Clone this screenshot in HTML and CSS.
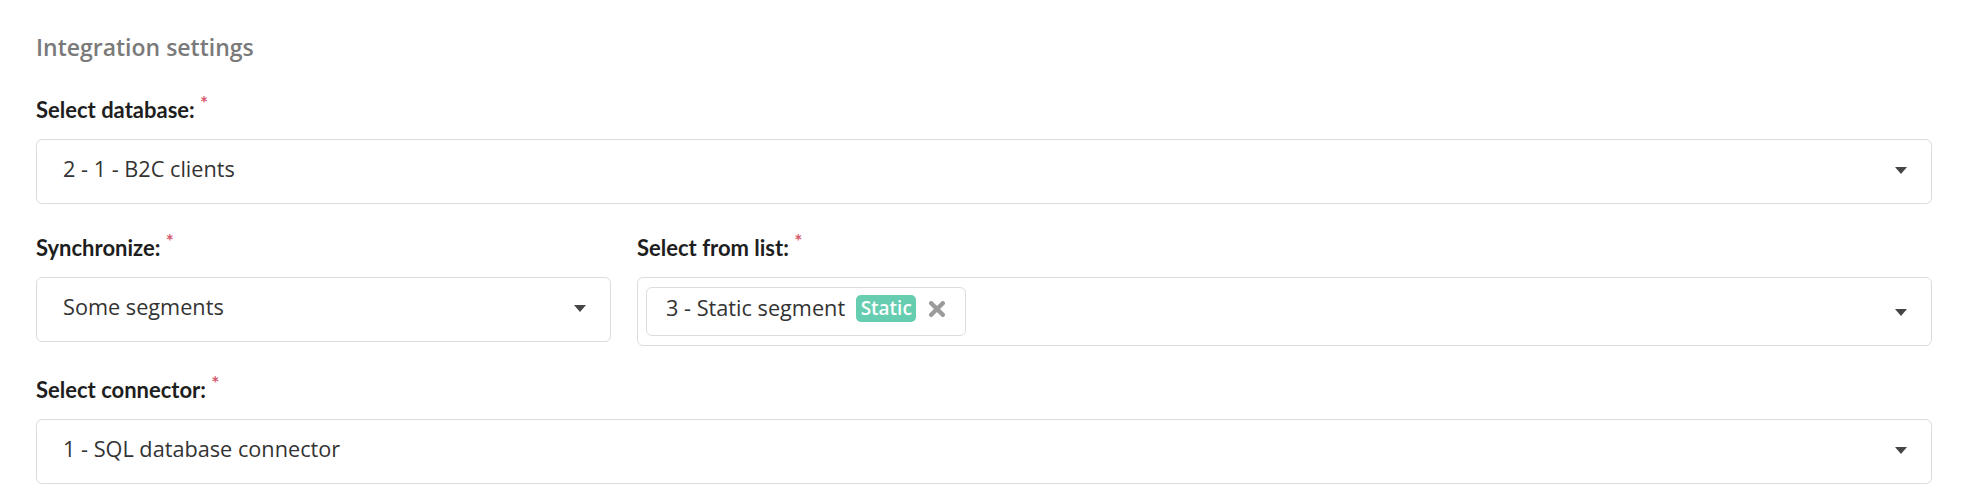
FILE: index.html
```html
<!DOCTYPE html>
<html lang="en">
<head>
<meta charset="utf-8">
<title>Integration settings</title>
<link rel="stylesheet" href="styles.css">
</head>
<body>
<main class="page">
  <h5 class="section-title">Integration settings</h5>

  <div class="form-group">
    <label class="field-label">Select database: <span class="req">*</span></label>
    <div class="select">
      <span class="select-value">2 - 1 - B2C clients</span>
      <span class="caret"></span>
    </div>
  </div>

  <div class="form-row">
    <div class="form-group">
      <label class="field-label">Synchronize: <span class="req">*</span></label>
      <div class="select">
        <span class="select-value">Some segments</span>
        <span class="caret"></span>
      </div>
    </div>
    <div class="form-group">
      <label class="field-label">Select from list: <span class="req">*</span></label>
      <div class="select select-multi">
        <span class="tag">
          <span class="tag-text">3 - Static segment</span>
          <span class="badge">Static</span>
          <svg class="tag-remove" width="18" height="16" viewBox="0 0 18 16" aria-hidden="true">
            <path d="M3.2 2.2 L14.8 13.8 M14.8 2.2 L3.2 13.8" stroke="#9b9b9b" stroke-width="4.4" stroke-linecap="round" fill="none"/>
          </svg>
        </span>
        <span class="caret"></span>
      </div>
    </div>
  </div>

  <div class="form-group">
    <label class="field-label">Select connector: <span class="req">*</span></label>
    <div class="select">
      <span class="select-value">1 - SQL database connector</span>
      <span class="caret"></span>
    </div>
  </div>
</main>
</body>
</html>
```
FILE: styles.css
```css
html, body {
  margin: 0;
  padding: 0;
  background: #ffffff;
}

.page {
  padding: 34px 35px 0 36px;
  font-family: "Open Sans", "Liberation Sans", sans-serif;
  color: #333333;
}

.section-title {
  margin: 0 0 31px 0;
  font-family: "Open Sans", "Liberation Sans", sans-serif;
  font-weight: 600;
  font-size: 23px;
  line-height: 1.2;
  color: #7a7a7a;
}

.form-group {
  margin-bottom: 27px;
}

.form-row {
  display: grid;
  grid-template-columns: 575px 1fr;
  column-gap: 26px;
}

.field-label {
  display: block;
  margin-bottom: 13px;
  font-family: "Lato", "Liberation Sans", sans-serif;
  font-weight: 700;
  font-size: 22px;
  line-height: 33px;
  color: #1e1e1e;
}

.req {
  font-size: 19px;
  font-weight: 700;
  line-height: 0;
  vertical-align: super;
  margin-left: 0;
  color: #d65a6e;
}

.select {
  box-sizing: border-box;
  height: 65px;
  display: flex;
  align-items: center;
  padding: 0 24px 4px 26px;
  border: 1px solid #dcdcdc;
  border-radius: 6px;
  background: #ffffff;
}

.select-value {
  flex: 1;
  font-size: 21.7px;
  line-height: 1.5;
  color: #333333;
  white-space: nowrap;
}

.caret {
  width: 0;
  height: 0;
  margin-top: 3px;
  border-left: 6.5px solid transparent;
  border-right: 6.5px solid transparent;
  border-top: 7px solid #454545;
}

.select-multi {
  height: 69px;
  padding: 9px 24px 9px 8px;
  justify-content: space-between;
}

.tag {
  box-sizing: border-box;
  height: 49px;
  display: flex;
  align-items: center;
  padding: 0 19px 5px 19px;
  border: 1px solid #dcdcdc;
  border-radius: 6px;
}

.tag-text {
  font-size: 21.7px;
  line-height: 1.5;
  color: #333333;
  white-space: nowrap;
}

.badge {
  margin-left: 11px;
  height: 27px;
  padding: 0 4.5px;
  border-radius: 5px;
  background: #66cdb1;
  color: #ffffff;
  font-weight: 600;
  font-size: 19px;
  line-height: 27px;
  white-space: nowrap;
}

.tag-remove {
  display: block;
  margin-left: 12px;
}
```
